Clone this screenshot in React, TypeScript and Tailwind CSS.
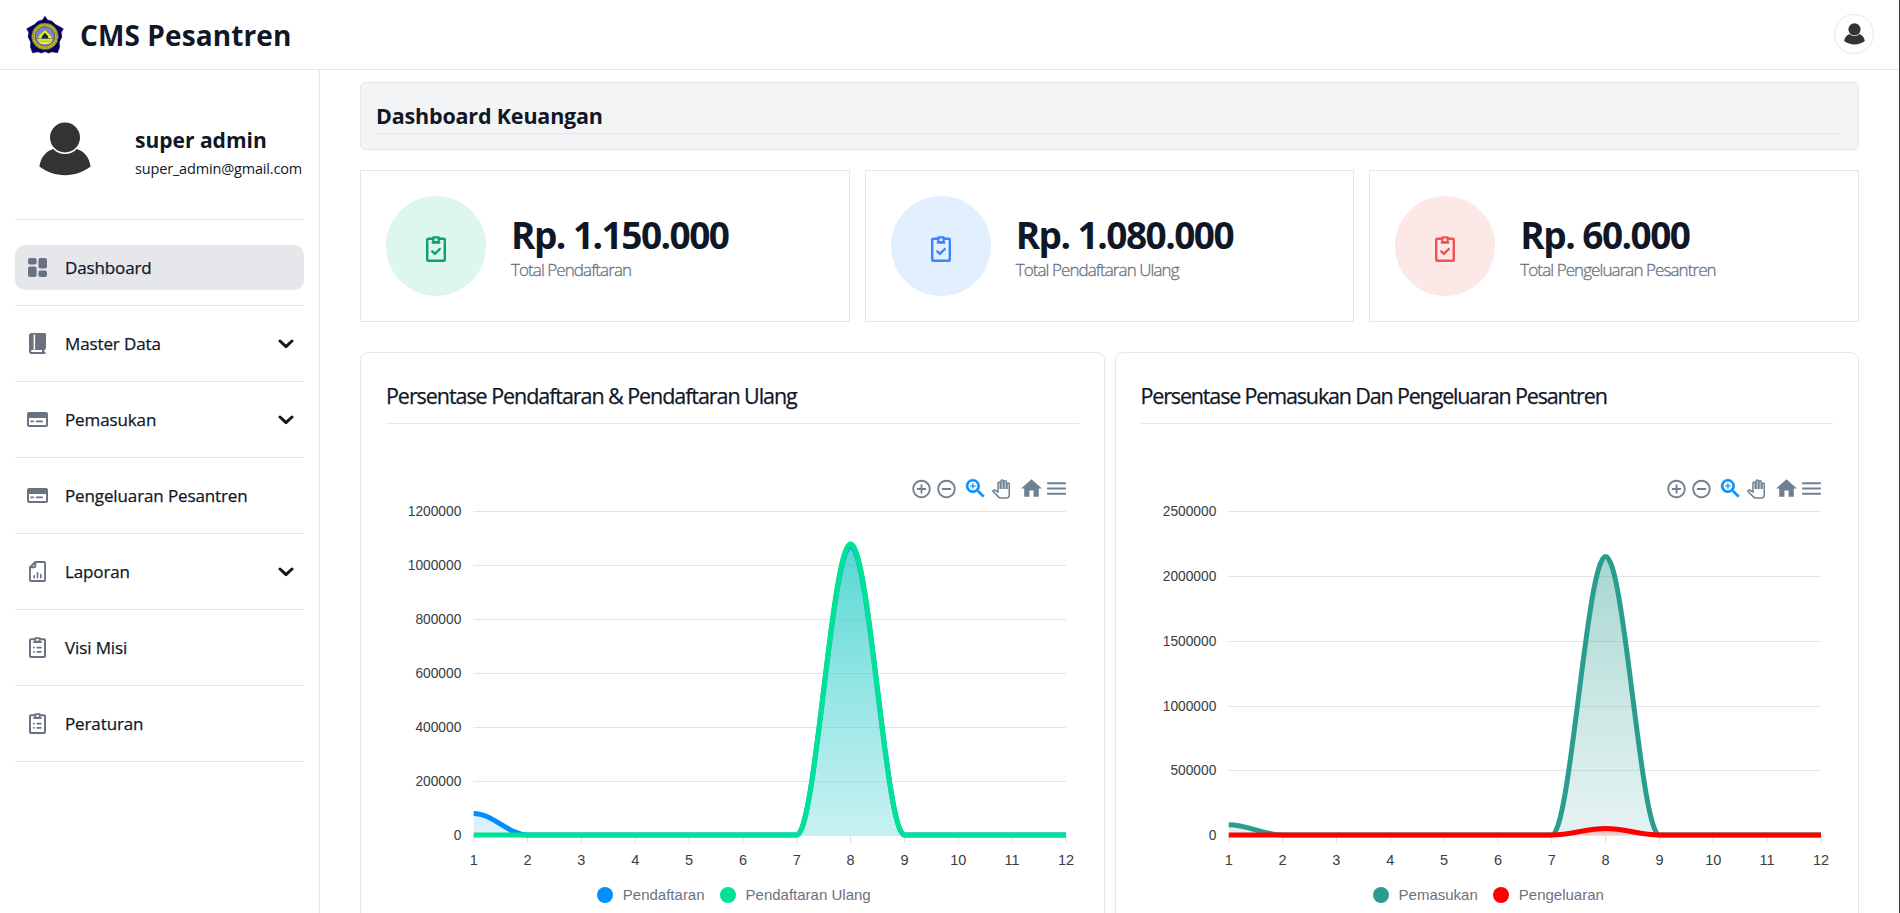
import React from 'react';

/* ---------- icons ---------- */

function Logo() {
  return (
    <svg viewBox="0 0 38 38" className="h-[38px] w-[38px]">
      <path
        d="M19 .3 L21.500 4 L26 5.200 L29.500 8.600 L37.300 12.800 L35.200 16.500 L35.800 21 L33.300 26 L33.500 31 L31.500 36.800 L26 35.800 L22.500 37 L19 35.600 L15.500 37 L12 35.800 L6.500 36.800 L4.500 31 L4.700 26 L2.200 21 L2.800 16.500 L.7 12.800 L8.500 8.600 L12 5.200 L16.500 4 Z"
        fill="#04045c"
        stroke="#04045c"
        strokeWidth=".6"
        strokeLinejoin="round"
      />
      <circle cx="19" cy="20.400" r="13.300" fill="#c9c23a" stroke="#55551c" strokeWidth=".8" />
      <circle cx="19" cy="20.400" r="11.600" fill="none" stroke="#8a8726" strokeWidth="1.600" strokeDasharray="1.300 1.200" />
      <circle cx="19" cy="20.400" r="9.700" fill="#7b7fe0" stroke="#4a4a2a" strokeWidth=".8" />
      <path d="M19 13 C20 16.500 25.500 17.500 26.300 22.500 H11.700 C12.500 17.500 18 16.500 19 13Z" fill="#e8ee22" stroke="#6b6b10" strokeWidth=".4" />
      <path d="M19 16.500 C19.800 18.500 22.800 19.500 22.300 22.500 H15.700 C15.200 19.500 18.200 18.500 19 16.500Z" fill="#10302a" />
      <path d="M11.300 23.300 H26.700 L24.700 27 Q19 29.500 13.300 27Z" fill="#f0f04a" />
      <path d="M13 25.200 H25" stroke="#7a7a1a" strokeWidth=".6" />
    </svg>
  );
}

function Person({ className }: { className: string }) {
  return (
    <svg viewBox="0 0 52 54" className={className} fill="#333333">
      <circle cx="26" cy="15.500" r="15" />
      <path d="M.4 44.600 C1.500 35.500 7 28.800 14.300 26.900 C17.200 30.200 21.300 32 26 32 C30.700 32 34.800 30.200 37.700 26.900 C45 28.800 50.500 35.500 51.600 44.600 C44 50.300 35.500 53.200 26 53.200 C16.500 53.200 8 50.300 .4 44.600Z" />
    </svg>
  );
}

function GridIcon() {
  return (
    <svg viewBox="0 0 19 19" className="h-[19px] w-[19px]" fill="currentColor">
      <rect x="0" y="0" width="8.600" height="6.500" rx="2" />
      <rect x="10.400" y="0" width="8.600" height="10.400" rx="2" />
      <rect x="0" y="8.600" width="8.600" height="10.400" rx="2" />
      <rect x="10.400" y="12.400" width="8.600" height="6.600" rx="2" />
    </svg>
  );
}

function BookIcon() {
  return (
    <svg viewBox="0 0 17 21" className="h-[21px] w-[17px]" fill="currentColor">
      <path d="M17 15V1.500A1.500 1.500 0 0 0 15.500 0H2.500A2.500 2.500 0 0 0 0 2.500v15.700A2.800 2.800 0 0 0 2.800 21h13.200a.9.9 0 0 0 0-1.800h-.6v-2.300A1.900 1.900 0 0 0 17 15ZM4.600 1.600h1.500v15.200H4.600V1.600Zm8.400 17.500H3a1 1 0 0 1 0-2h10v2Z" />
    </svg>
  );
}

function CardIcon() {
  return (
    <svg viewBox="0 0 21 15" className="h-[15px] w-[21px]" fill="currentColor">
      <path d="M19 0H2a2 2 0 0 0-2 2v11a2 2 0 0 0 2 2h17a2 2 0 0 0 2-2V2a2 2 0 0 0-2-2ZM2 13V6h17v7H2Z" />
      <path d="M6.200 8.600H4.100a.8.8 0 0 0 0 1.600h2.100a.8.8 0 0 0 0-1.600Zm9 0H9.500a.8.8 0 0 0 0 1.600h5.700a.8.8 0 1 0 0-1.600Z" />
    </svg>
  );
}

function ReportIcon() {
  return (
    <svg viewBox="0 0 17 21" className="h-[21px] w-[17px]" fill="none" stroke="currentColor" strokeWidth="1.900" strokeLinecap="round" strokeLinejoin="round">
      <path d="M6.200 1H15a1.100 1.100 0 0 1 1.100 1.100v16.800A1.100 1.100 0 0 1 15 20H2a1.100 1.100 0 0 1-1.100-1.100V6.300L6.200 1Zm.1 0v4.200a1 1 0 0 1-1 1H1" />
      <path d="M5.200 14.800v2M8.500 11.800v5M11.800 13.500v3.300" strokeWidth="1.600" />
    </svg>
  );
}

function ListIcon() {
  return (
    <svg viewBox="0 0 17 21" className="h-[21px] w-[17px]" fill="none" stroke="currentColor" strokeWidth="2" strokeLinecap="round" strokeLinejoin="round">
      <path d="M11.500 2.200H15A1 1 0 0 1 16 3.200v15.800a1 1 0 0 1-1 1H2a1 1 0 0 1-1-1V3.200a1 1 0 0 1 1-1h3.500" />
      <path d="M6.300 1.200h4.400v3.400H6.300ZM5 5.200h7" strokeWidth="1.800" />
      <path d="M4.800 10.600h.3M8.300 10.600h3.600M4.800 14.800h.3M8.300 14.800h3.600" strokeWidth="1.700" />
    </svg>
  );
}

function ChevronDown() {
  return (
    <svg viewBox="0 0 16 10" className="h-[10px] w-[16px]" fill="none" stroke="#111827" strokeWidth="3" strokeLinecap="round" strokeLinejoin="round">
      <path d="M2 2l6 5.700 6-5.700" />
    </svg>
  );
}

function CheckBoard({ className }: { className: string }) {
  return (
    <svg viewBox="0 0 20 26" className={className} fill="none" stroke="currentColor" strokeWidth="2.400" strokeLinecap="round" strokeLinejoin="round">
      <path d="M14 2.800h3.700a1.100 1.100 0 0 1 1.100 1.100v19.800a1.100 1.100 0 0 1-1.100 1.100H2.300a1.100 1.100 0 0 1-1.100-1.100V3.900a1.100 1.100 0 0 1 1.100-1.100H6" />
      <path d="M7.300 1.300h5.400v4.900H7.300ZM6.600 6.600h6.800" strokeWidth="2.200" />
      <path d="M6.300 15.300l2.600 2.600 4.900-4.900" />
    </svg>
  );
}

/* ---------- sidebar ---------- */

type NavItem = { label: string; icon: React.ReactNode; more?: boolean; active?: boolean };

const nav: NavItem[] = [
  { label: 'Dashboard', icon: <GridIcon />, active: true },
  { label: 'Master Data', icon: <BookIcon />, more: true },
  { label: 'Pemasukan', icon: <CardIcon />, more: true },
  { label: 'Pengeluaran Pesantren', icon: <CardIcon /> },
  { label: 'Laporan', icon: <ReportIcon />, more: true },
  { label: 'Visi Misi', icon: <ListIcon /> },
  { label: 'Peraturan', icon: <ListIcon /> },
];

function Sidebar() {
  return (
    <aside className="flex w-[320px] shrink-0 flex-col border-r border-gray-200 px-[15px]">
      <div className="flex h-[150px] shrink-0 items-start border-b border-gray-200 pl-6">
        <Person className="mt-[52px] h-[54px] w-[52px]" />
        <div className="mt-[54px] ml-11 whitespace-nowrap text-gray-900">
          <div className="text-[21px] leading-[33px] font-bold">super admin</div>
          <div className="text-[14.5px] leading-[23px] tracking-[-0.17px]">super_admin@gmail.com</div>
        </div>
      </div>
      <nav className="flex flex-col pt-[10px]">
        {nav.map((item) => (
          <div key={item.label} className="border-b border-gray-200 py-[15px]">
            <a
              className={
                item.active
                  ? 'flex h-[45px] items-center rounded-[10px] bg-gray-200 pr-[10px] pl-[10px]'
                  : 'flex h-[45px] items-center rounded-[10px] pr-[10px] pl-[10px]'
              }
            >
              <span className="flex w-[25px] justify-center text-gray-500">{item.icon}</span>
              <span className="ml-[15px] flex-1 pt-px text-[17px] leading-6 tracking-[-0.12px] whitespace-nowrap text-gray-900 [-webkit-text-stroke:0.25px]">
                {item.label}
              </span>
              {item.more && <ChevronDown />}
            </a>
          </div>
        ))}
      </nav>
    </aside>
  );
}

/* ---------- summary cards ---------- */

const stats = [
  { value: 'Rp. 1.150.000', label: 'Total Pendaftaran', disc: 'bg-[#def7ec]', ink: 'text-[#0e9f6e]' },
  { value: 'Rp. 1.080.000', label: 'Total Pendaftaran Ulang', disc: 'bg-[#e1effe]', ink: 'text-[#3f83f8]' },
  { value: 'Rp. 60.000', label: 'Total Pengeluaran Pesantren', disc: 'bg-[#fde8e8]', ink: 'text-[#f05252]' },
];

function Stats() {
  return (
    <div className="mt-5 grid grid-cols-3 gap-[15px]">
      {stats.map((s) => (
        <div key={s.label} className="flex h-[152px] items-center border border-gray-200 px-[25px]">
          <div className={`flex h-[100px] w-[100px] shrink-0 items-center justify-center rounded-full pt-1.5 ${s.disc}`}>
            <CheckBoard className={`h-[26px] w-[20px] ${s.ink}`} />
          </div>
          <div className="ml-[25px] pt-[8px] whitespace-nowrap">
            <div className="mb-[2px] text-[37px] leading-[38px] font-bold tracking-[-0.041em] text-gray-900">{s.value}</div>
            <div className="text-[17px] leading-[28px] font-light tracking-[-0.92px] text-gray-500 [-webkit-text-stroke:0.3px]">{s.label}</div>
          </div>
        </div>
      ))}
    </div>
  );
}

/* ---------- charts ---------- */

type Series = { name: string; color: string; pale: string; data: number[] };
type ChartProps = { id: string; title: React.ReactNode; max: number; step: number; series: Series[] };

const X0 = 87.7;
const X1 = 680;
const Y0 = 10.3;
const Y1 = 334;

function monthX(i: number) {
  return X0 + (i * (X1 - X0)) / 11;
}

function linePath(data: number[], max: number) {
  const y = (v: number) => Y1 - (v / max) * (Y1 - Y0);
  let d = `M${monthX(0)} ${y(data[0])}`;
  for (let i = 1; i < data.length; i++) {
    const a = monthX(i - 1);
    const b = monthX(i);
    const k = (b - a) * 0.35;
    d += ` C${a + k} ${y(data[i - 1])} ${b - k} ${y(data[i])} ${b} ${y(data[i])}`;
  }
  return d;
}

function Toolbar() {
  return (
    <div className="flex h-[25px] items-center justify-end pr-[9.5px] text-[#6e8192]">
      <svg viewBox="0 0 24 24" className="h-[22px] w-[25px]" fill="currentColor">
        <path d="M13 7h-2v4H7v2h4v4h2v-4h4v-2h-4V7zm-1-5C6.480 2 2 6.480 2 12s4.480 10 10 10 10-4.480 10-10S17.520 2 12 2zm0 18c-4.410 0-8-3.590-8-8s3.590-8 8-8 8 3.590 8 8-3.590 8-8 8z" />
      </svg>
      <svg viewBox="0 0 24 24" className="h-[22px] w-[25px]" fill="currentColor">
        <path d="M7 11v2h10v-2H7zm5-9C6.480 2 2 6.480 2 12s4.480 10 10 10 10-4.480 10-10S17.520 2 12 2zm0 18c-4.410 0-8-3.590-8-8s3.590-8 8-8 8 3.590 8 8-3.590 8-8 8z" />
      </svg>
      <svg viewBox="0 0 24 24" className="ml-1 h-[25px] w-[25px]" fill="#008ffb" stroke="#008ffb" strokeWidth=".5">
        <path d="M15.500 14h-.79l-.28-.27C15.410 12.590 16 11.110 16 9.500 16 5.910 13.090 3 9.500 3S3 5.910 3 9.500 5.910 16 9.500 16c1.610 0 3.090-.59 4.230-1.570l.27.28v.79l5 4.990L20.490 19l-4.990-5zm-6 0C7.010 14 5 11.990 5 9.500S7.010 5 9.500 5 14 7.010 14 9.500 11.990 14 9.500 14z" />
        <path d="M12 10h-2v2H9v-2H7V9h2V7h1v2h2v1z" strokeWidth=".2" />
      </svg>
      <svg viewBox="0 0 24 24" className="ml-1 h-[18px] w-[18px] overflow-visible" fill="#ffffff" stroke="currentColor" strokeWidth="2">
        <path d="M23 5.500V20c0 2.200-1.800 4-4 4h-7.300c-1.080 0-2.100-.43-2.850-1.190L1 14.830s1.260-1.230 1.300-1.250c.22-.19.49-.29.79-.29.22 0 .42.06.6.16.04.01 4.310 2.460 4.310 2.460V4c0-.83.67-1.500 1.500-1.500S11 3.170 11 4v7h1V1.500c0-.83.67-1.500 1.500-1.500S15 .67 15 1.500V11h1V2.500c0-.83.67-1.500 1.500-1.500s1.500.67 1.500 1.500V11h1V5.500c0-.83.67-1.500 1.500-1.500s1.500.67 1.500 1.500z" />
      </svg>
      <svg viewBox="0 0 24 24" className="ml-[9px] h-[25px] w-[25px]" fill="currentColor">
        <path d="M10 20v-6h4v6h5v-8h3L12 3 2 12h3v8z" />
      </svg>
      <svg viewBox="0 0 24 24" className="h-[25px] w-[25px]" fill="currentColor">
        <path d="M3 18h18v-2H3v2zm0-5h18v-2H3v2zm0-7v2h18V6H3z" />
      </svg>
    </div>
  );
}

function ChartCard({ id, title, max, step, series }: ChartProps) {
  const ticks: number[] = [];
  for (let v = max; v >= 0; v -= step) ticks.push(v);
  return (
    <section className="h-[600px] rounded-[8px] border border-gray-200 px-[25px]">
      <h2 className="h-[71px] border-b border-gray-200 pt-[25.5px] text-[21.5px] leading-[34px] whitespace-nowrap text-gray-900 [-webkit-text-stroke:0.25px]">
        {title}
      </h2>
      <div className="pt-[52px]">
        <Toolbar />
      </div>
      <svg viewBox="0 0 693 378" className="block h-[378px] w-[693px] font-['Liberation_Sans',Arial,sans-serif]">
        <defs>
          {series.map((s, i) => (
            <linearGradient key={s.name} id={`${id}-${i}`} x1="0" y1="0" x2="0" y2="1">
              <stop offset="0" stopColor={s.color} stopOpacity=".42" />
              <stop offset="1" stopColor={s.pale} stopOpacity=".25" />
            </linearGradient>
          ))}
        </defs>
        {ticks.map((v) => {
          const y = Y1 - (v / max) * (Y1 - Y0);
          return (
            <g key={v}>
              <line x1={X0} x2={X1} y1={Math.round(y) + 0.5} y2={Math.round(y) + 0.5} stroke="#e3e5e8" />
              <text x="75.3" y={y + 5} textAnchor="end" fontSize="13.75" fill="#373d3f">
                {v}
              </text>
            </g>
          );
        })}
        {series[0].data.map((_, i) => (
          <g key={i}>
            <line x1={monthX(i)} x2={monthX(i)} y1={Y1} y2={Y1 + 8} stroke="#dcdcdc" />
            <text x={monthX(i)} y="364" textAnchor="middle" fontSize="14.5" fill="#373d3f">
              {i + 1}
            </text>
          </g>
        ))}
        {series.map((s, i) => (
          <g key={s.name}>
            <path d={`${linePath(s.data, max)} L${X1} ${Y1} L${X0} ${Y1} Z`} fill={`url(#${id}-${i})`} />
            <path d={linePath(s.data, max)} fill="none" stroke={s.color} strokeWidth="5" />
          </g>
        ))}
      </svg>
      <div className="flex h-[32px] items-center justify-center gap-[15px] pl-[3px] font-['Liberation_Sans',Arial,sans-serif] text-[15px] text-gray-500">
        {series.map((s) => (
          <span key={s.name} className="flex items-center gap-[10px]">
            <svg viewBox="0 0 16 16" className="h-4 w-4">
              <circle cx="8" cy="8" r="8" fill={s.color} />
            </svg>
            {s.name}
          </span>
        ))}
      </div>
    </section>
  );
}

/* ---------- page ---------- */

export default function App() {
  return (
    <div className="flex h-[913px] w-full flex-col overflow-hidden border-r border-[#3c3c3c] bg-white font-['Open_Sans','Noto_Sans',sans-serif]">
      <header className="flex h-[70px] shrink-0 items-center justify-between border-b border-gray-200 pr-[25px] pl-[26px]">
        <div className="flex items-center gap-[16px]">
          <Logo />
          <span className="text-[28px] leading-[40px] font-bold tracking-[0.1px] whitespace-nowrap text-gray-900">CMS Pesantren</span>
        </div>
        <div className="mb-px flex h-10 w-10 items-center justify-center rounded-full border border-gray-200">
          <Person className="mb-px h-[22px] w-[21px]" />
        </div>
      </header>
      <div className="flex min-h-0 flex-1">
        <Sidebar />
        <main className="min-w-0 flex-1 overflow-hidden pt-3 pr-10 pl-10">
          <div className="h-[68px] rounded-[5px] border border-gray-200 bg-gray-100 px-[15px]">
            <h1 className="h-[51px] border-b border-gray-200 pt-[17px] text-[21.5px] leading-[32px] font-bold tracking-[-0.18px] text-gray-900">
              Dashboard Keuangan
            </h1>
          </div>
          <Stats />
          <div className="mt-[30px] grid grid-cols-2 gap-[10px]">
            <ChartCard
              id="reg"
              title={<span className="tracking-[-1.06px]">Persentase Pendaftaran &amp; Pendaftaran Ulang</span>}
              max={1200000}
              step={200000}
              series={[
                { name: 'Pendaftaran', color: '#008ffb', pale: '#80c7fd', data: [80000, 0, 0, 0, 0, 0, 0, 1070000, 0, 0, 0, 0] },
                { name: 'Pendaftaran Ulang', color: '#00e396', pale: '#80f1cb', data: [0, 0, 0, 0, 0, 0, 0, 1080000, 0, 0, 0, 0] },
              ]}
            />
            <ChartCard
              id="cash"
              title={<span className="tracking-[-1.16px]">Persentase Pemasukan Dan Pengeluaran Pesantren</span>}
              max={2500000}
              step={500000}
              series={[
                { name: 'Pemasukan', color: '#2a9d8f', pale: '#94cec7', data: [80000, 0, 0, 0, 0, 0, 0, 2150000, 0, 0, 0, 0] },
                { name: 'Pengeluaran', color: '#ff0000', pale: '#ff8080', data: [0, 0, 0, 0, 0, 0, 0, 50000, 0, 0, 0, 0] },
              ]}
            />
          </div>
        </main>
      </div>
    </div>
  );
}
